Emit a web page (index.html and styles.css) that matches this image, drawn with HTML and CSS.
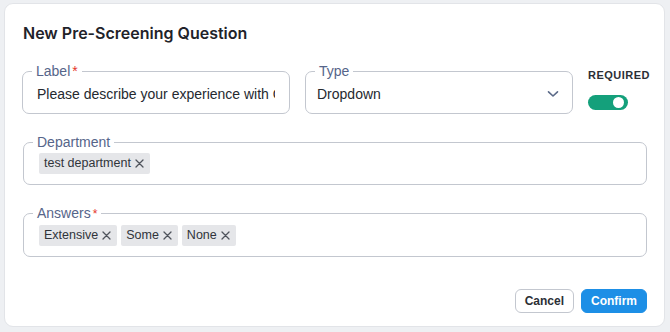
FILE: index.html
```html
<!DOCTYPE html>
<html lang="en">
<head>
    <meta charset="UTF-8">
    <meta name="viewport" content="width=device-width, initial-scale=1.0">
    <title>New Pre-Screening Question</title>
    <link rel="stylesheet" href="styles.css">
</head>
<body>

    <div class="dialog">
        <h2 class="dialog-title">New Pre-Screening Question</h2>

        <div class="top-row">
            <fieldset class="field field-label">
                <legend>Label<span class="req">*</span></legend>
                <div class="field-value">Please describe your experience with GraphQL</div>
            </fieldset>

            <fieldset class="field field-type">
                <legend>Type</legend>
                <div class="field-value select-value">
                    <span>Dropdown</span>
                    <svg class="chevron" width="12" height="8" viewBox="0 0 12 8">
                        <path d="M1.5 1.8 L6 6 L10.5 1.8" fill="none" stroke="#5b6a88" stroke-width="1.6" stroke-linecap="round" stroke-linejoin="round"/>
                    </svg>
                </div>
            </fieldset>

            <div class="required">
                <span class="required-title">REQUIRED</span>
                <span class="toggle"><span class="toggle-thumb"></span></span>
            </div>
        </div>

        <fieldset class="field field-chips">
            <legend>Department</legend>
            <div class="chips">
                <span class="chip">test department <svg class="chip-x" width="9" height="9" viewBox="0 0 9 9"><path d="M1 1 L8 8 M8 1 L1 8" stroke="#4f545c" stroke-width="1.3" stroke-linecap="round"/></svg></span>
            </div>
        </fieldset>

        <fieldset class="field field-chips">
            <legend>Answers<span class="req dot">*</span></legend>
            <div class="chips">
                <span class="chip">Extensive <svg class="chip-x" width="9" height="9" viewBox="0 0 9 9"><path d="M1 1 L8 8 M8 1 L1 8" stroke="#4f545c" stroke-width="1.3" stroke-linecap="round"/></svg></span>
                <span class="chip">Some <svg class="chip-x" width="9" height="9" viewBox="0 0 9 9"><path d="M1 1 L8 8 M8 1 L1 8" stroke="#4f545c" stroke-width="1.3" stroke-linecap="round"/></svg></span>
                <span class="chip">None <svg class="chip-x" width="9" height="9" viewBox="0 0 9 9"><path d="M1 1 L8 8 M8 1 L1 8" stroke="#4f545c" stroke-width="1.3" stroke-linecap="round"/></svg></span>
            </div>
        </fieldset>

        <div class="actions">
            <button class="btn btn-cancel">Cancel</button>
            <button class="btn btn-confirm">Confirm</button>
        </div>
    </div>

</body>
</html>
```

FILE: styles.css
```css
body {
    font-family: 'Liberation Sans', 'Arial', sans-serif;
    background-color: #eef0f3;
    color: #2b2f36;
    margin: 0;
    padding: 3px 5px 5px 4px;
}
.dialog {
    background-color: #fff;
    border: 1px solid #e2e4e8;
    border-radius: 9px;
    padding: 17px 17px 13px 17px;
    height: 324px;
    box-sizing: border-box;
}
.dialog-title {
    font-family: 'Inter', 'Liberation Sans', sans-serif;
    font-size: 16px;
    font-weight: 600;
    line-height: 24px;
    margin: 0 0 18px 1px;
    color: #1f232a;
}
.top-row {
    display: flex;
    gap: 15px;
    margin-bottom: 20px;
}
.field {
    border: 1px solid #c3c7cf;
    border-radius: 7px;
    margin: 0 0 20px 1px;
    padding: 5px 14px 9px 14px;
    min-width: 0;
}
.field-chips {
    padding: 3px 14px 10px 14px;
}
.top-row .field {
    margin: 0;
    flex: 1;
}
.field legend {
    font-size: 14px;
    line-height: 16px;
    color: #56658a;
    padding: 0 4px;
    margin-left: -5px;
}
.req {
    color: #e5352b;
    margin-left: 2px;
}
.req.dot {
    font-size: 12px;
}
.field-value {
    font-size: 14px;
    line-height: 20px;
    color: #25292f;
    white-space: nowrap;
    overflow: hidden;
}
.select-value {
    display: flex;
    justify-content: space-between;
    align-items: center;
    margin-left: -3px;
    margin-right: -1px;
}
.required {
    display: flex;
    flex-direction: column;
    align-items: flex-start;
    width: 59px;
    padding-top: 5px;
}
.required-title {
    font-size: 11px;
    font-weight: 700;
    letter-spacing: 0.5px;
    color: #2b2f36;
    line-height: 14px;
}
.toggle {
    display: flex;
    justify-content: flex-end;
    align-items: center;
    width: 40px;
    height: 15px;
    border-radius: 8px;
    background-color: #14a07b;
    margin-top: 13px;
    padding: 0 4px;
    box-sizing: border-box;
}
.toggle-thumb {
    width: 11px;
    height: 11px;
    border-radius: 50%;
    background-color: #fff;
}
.chips {
    display: flex;
    gap: 4px;
    padding-left: 1px;
}
.chip {
    display: flex;
    align-items: center;
    gap: 4px;
    background-color: #e5e6e9;
    border-radius: 2px;
    font-size: 12.5px;
    line-height: 21px;
    padding: 0 6px 0 5px;
    color: #30343a;
    white-space: nowrap;
}
.actions {
    display: flex;
    justify-content: flex-end;
    gap: 7px;
    margin-top: 32px;
}
.btn {
    font-family: 'Liberation Sans', 'Arial', sans-serif;
    font-size: 12px;
    font-weight: 700;
    height: 24px;
    border-radius: 6px;
    padding: 0 9px;
    cursor: pointer;
}
.btn-cancel {
    background-color: #fff;
    border: 1px solid #c3c7cf;
    color: #2b2f36;
}
.btn-confirm {
    background-color: #1d8fe6;
    border: 1px solid #1d8fe6;
    color: #fff;
    padding: 0 9px;
}
```
